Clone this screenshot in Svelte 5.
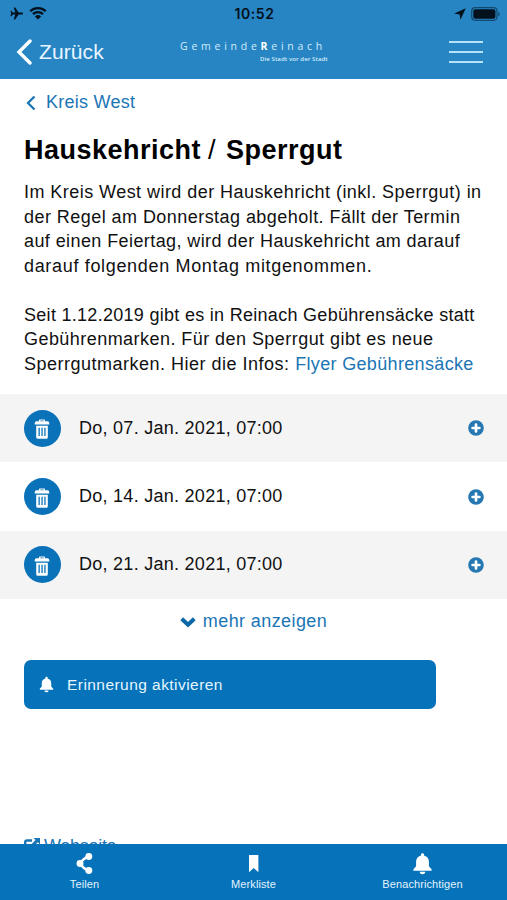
<script lang="ts">
  interface Pickup {
    date: string;
  }

  const pickups: Pickup[] = [
    { date: 'Do, 07. Jan. 2021, 07:00' },
    { date: 'Do, 14. Jan. 2021, 07:00' },
    { date: 'Do, 21. Jan. 2021, 07:00' }
  ];

  const bell =
    'M12 1.2c-1 0-1.6.7-1.6 1.6v.8C7 4.4 5.3 7 5.3 10.2v4.7L2.5 18v1.5h19V18l-2.8-3.1v-4.7c0-3.2-1.7-5.8-5.1-6.6v-.8c0-.9-.6-1.6-1.6-1.6zM9.1 20.5a2.9 2.6 0 0 0 5.8 0z';
</script>

<div class="screen">
  <header>
    <div class="status">
      <span class="status-side">
        <svg class="plane" viewBox="0 0 24 24" aria-hidden="true">
          <path d="M24 12c0-1.300-1-2-2.500-2H16L9.500 1H6.800l3 9H5L2.800 7H.8l1.400 5-1.400 5h2L5 14h4.800l-3 9h2.700l6.500-9h5.500c1.500 0 2.500-.7 2.500-2z" />
        </svg>
        <svg class="wifi" viewBox="0 0 18 14" aria-hidden="true">
          <path d="M1.200 5.200a11.200 11.200 0 0 1 15.600 0M4 8.200a7.200 7.200 0 0 1 10 0" />
          <path class="solid" d="M9 13.600 5.900 10.500a4.500 4.500 0 0 1 6.200 0z" />
        </svg>
      </span>
      <time>10:52</time>
      <span class="status-side end">
        <svg class="locate" viewBox="0 0 12 12" aria-hidden="true">
          <path d="M11.800.2.200 5.600l5.400.8.800 5.400z" />
        </svg>
        <svg class="battery" viewBox="0 0 30 14" aria-hidden="true">
          <rect class="shell" x=".7" y=".7" width="25.300" height="12.600" rx="3.500" />
          <rect x="2.300" y="2.300" width="22.100" height="9.400" rx="2" />
          <path class="cap" d="M27.300 4.700v4.600c1.800-.7 1.800-3.900 0-4.600z" />
        </svg>
      </span>
    </div>
    <nav class="topbar">
      <a class="back" href="#zurueck">
        <svg viewBox="0 0 16 26" aria-hidden="true"><path d="M14 2 3 13l11 11" /></svg>
        <span>Zurück</span>
      </a>
      <div class="brand">
        <span class="brand-name">Gemeinde<b>R</b>einach</span>
        <span class="brand-claim">Die Stadt vor der Stadt</span>
      </div>
      <button class="menu" aria-label="Menü"><i></i><i></i><i></i></button>
    </nav>
  </header>

  <main>
    <a class="crumb" href="#kreis-west">
      <svg viewBox="0 0 10 16" aria-hidden="true"><path d="M8.500 1.500 2 8l6.500 6.500" /></svg>
      <span>Kreis West</span>
    </a>
    <h1>Hauskehricht <span class="slash">/</span> Sperrgut</h1>
    <p>
      <span class="l1">Im Kreis West wird der Hauskehricht (inkl. Sperrgut) in</span><br />
      <span class="l2">der Regel am Donnerstag abgeholt. Fällt der Termin</span><br />
      <span class="l3">auf einen Feiertag, wird der Hauskehricht am darauf</span><br />
      <span class="l4">darauf folgenden Montag mitgenommen.</span>
    </p>
    <p>
      <span class="l5">Seit 1.12.2019 gibt es in Reinach Gebührensäcke statt</span><br />
      <span class="l6">Gebührenmarken. Für den Sperrgut gibt es neue</span><br />
      <span>Sperrgutmarken. Hier die Infos: <a class="flyer" href="#flyer">Flyer Gebührensäcke</a></span>
    </p>

    <ul>
      {#each pickups as pickup}
        <li>
          <span class="badge">
            <svg viewBox="0 0 16 20" aria-hidden="true">
              <path d="M5 2.300V1.200Q5 .5 5.700.5h4.600q.7 0 .7.700v1.100h2.500q1.800 0 1.800 2.300v1H.7v-1q0-2.300 1.800-2.300zm1.300 0h3.400v-.7H6.300z" />
              <path fill-rule="evenodd" d="M2.200 6.800h11.600v11.400q0 1.500-1.500 1.500H3.700q-1.500 0-1.500-1.500zM4.500 8.700v8.300h1.300V8.700zm2.900 0v8.300h1.300V8.700zm2.900 0v8.300h1.300V8.700z" />
            </svg>
          </span>
          <span class="date">{pickup.date}</span>
          <button class="add" aria-label="Hinzufügen">
            <svg viewBox="0 0 16 16" aria-hidden="true">
              <circle cx="8" cy="8" r="7.800" />
              <path d="M8 4.600v6.800M4.600 8h6.800" />
            </svg>
          </button>
        </li>
      {/each}
    </ul>

    <button class="more">
      <svg viewBox="0 0 16 12" aria-hidden="true"><path d="m1.700 2.800 6.300 6 6.300-6" /></svg>
      <span>mehr anzeigen</span>
    </button>

    <button class="remind">
      <svg viewBox="0 0 24 24" aria-hidden="true"><path d={bell} /></svg>
      <span>Erinnerung aktivieren</span>
    </button>

    <a class="website" href="#webseite">
      <svg viewBox="0 0 16 16" aria-hidden="true">
        <path class="box" d="M8 2.500H3q-1.800 0-1.800 1.800v8.500q0 1.700 1.800 1.700h8.500q1.700 0 1.700-1.700V10" />
        <path d="M9.500 0H16v6.500l-2.200-2.200-6 6-2.200-2.200 6-6z" />
      </svg>
      <span>Webseite</span>
    </a>
  </main>

  <footer>
    <a href="#teilen">
      <svg viewBox="0 0 24 24" aria-hidden="true">
        <path class="link" d="M16.500 4.700Q11 6.200 7.500 12q3.500 5.800 9 7.300" />
        <circle cx="16.500" cy="4.700" r="3.600" />
        <circle cx="7.300" cy="12" r="3.600" />
        <circle cx="16.500" cy="19.300" r="3.600" />
      </svg>
      <span>Teilen</span>
    </a>
    <a href="#merkliste">
      <svg viewBox="0 0 24 24" aria-hidden="true"><path d="M7.300 3h9.800v18L12.200 16.800 7.300 21z" /></svg>
      <span>Merkliste</span>
    </a>
    <a href="#benachrichtigen">
      <svg viewBox="0 0 24 24" aria-hidden="true"><path d={bell} /></svg>
      <span>Benachrichtigen</span>
    </a>
  </footer>
</div>

<style>
  :global(body) {
    background: #fff;
  }
  .screen {
    display: flex;
    flex-direction: column;
    height: 900px;
    overflow: hidden;
    font-family: 'Liberation Sans', Arial, sans-serif;
    color: #111;
  }
  a {
    color: #1b75b5;
    text-decoration: none;
  }
  button {
    border: 0;
    padding: 0;
    background: none;
    font: inherit;
    color: inherit;
  }
  svg {
    display: block;
    flex: none;
    fill: currentColor;
  }
  span {
    white-space: nowrap;
  }

  header {
    flex: none;
    height: 79px;
    background: #2785c3;
  }
  .status {
    display: grid;
    grid-template-columns: 1fr auto 1fr;
    align-items: center;
    height: 26px;
    padding: 0 6px 0 8px;
    color: #03111d;
  }
  time {
    font: 600 14px/26px Inter, sans-serif;
    letter-spacing: 0.6px;
    padding-top: 1px;
  }
  .status-side {
    display: flex;
    align-items: center;
    gap: 5px;
  }
  .end {
    justify-content: flex-end;
    gap: 5px;
  }
  .plane {
    width: 15px;
    height: 13px;
    margin-left: 1px;
  }
  .wifi {
    width: 18px;
    height: 14px;
    margin-top: -2px;
  }
  .wifi path {
    fill: none;
    stroke: currentColor;
    stroke-width: 2.3;
  }
  .wifi .solid {
    fill: currentColor;
    stroke: none;
  }
  .locate {
    width: 12px;
    height: 12px;
  }
  .battery {
    width: 30px;
    height: 14px;
  }
  .shell {
    fill: none;
    stroke: #11486f;
    stroke-width: 1.2;
  }
  .cap {
    fill: #11486f;
  }

  .topbar {
    display: grid;
    grid-template-columns: 180px 1fr 58px;
    height: 53px;
    color: #e9f6ff;
  }
  .back {
    display: flex;
    align-items: center;
    gap: 7px;
    padding: 0 0 1px 16px;
    color: inherit;
    font-size: 21px;
    letter-spacing: 0.1px;
  }
  .back svg {
    width: 16px;
    height: 26px;
    fill: none;
    stroke: #fff;
    stroke-width: 3.4;
    stroke-linecap: round;
  }
  .brand {
    display: flex;
    flex-direction: column;
    padding-top: 14px;
    font-family: 'Open Sans', sans-serif;
    color: #d3ecfb;
  }
  .brand-name {
    font-size: 10.5px;
    line-height: 13px;
    letter-spacing: 3.75px;
  }
  .brand-name b {
    color: #fff;
  }
  .brand-claim {
    margin-left: 80px;
    font-size: 6px;
    font-weight: 600;
    line-height: 12px;
    letter-spacing: 0.1px;
  }
  .menu {
    display: flex;
    flex-direction: column;
    gap: 8px;
    width: 34px;
    padding-top: 15px;
  }
  .menu i {
    height: 2px;
    background: #b4e2f8;
  }

  main {
    flex: 1;
    min-height: 0;
    overflow: hidden;
    display: flex;
    flex-direction: column;
  }
  .crumb {
    display: flex;
    align-items: center;
    gap: 10px;
    margin: 13px 0 0 26px;
    height: 23px;
    font-size: 18px;
    letter-spacing: 0.25px;
  }
  .crumb svg {
    width: 10px;
    height: 16px;
    fill: none;
    stroke: currentColor;
    stroke-width: 2.3;
  }
  h1 {
    margin: 18px 24px 0;
    height: 36px;
    font-size: 27px;
    line-height: 38px;
    letter-spacing: 0.5px;
    color: #000;
  }
  .slash {
    font-weight: 400;
    margin: 0 2px 0 -1px;
  }
  p {
    margin: 13px 0 0 24px;
    font-size: 18px;
    line-height: 24.5px;
    letter-spacing: 0.5px;
  }
  p + p {
    margin-top: 24.5px;
  }
  .l1,
  .l2,
  .l6 {
    letter-spacing: 0.45px;
  }
  .l3 {
    letter-spacing: 0.41px;
  }
  .l4 {
    letter-spacing: 0.67px;
  }
  .l5 {
    letter-spacing: 0.29px;
  }
  .flyer {
    letter-spacing: 0.34px;
  }

  ul {
    margin: 18px 0 0;
    padding: 0;
    list-style: none;
  }
  li {
    display: flex;
    align-items: center;
    height: 68.4px;
    padding: 0 23px 0 24px;
  }
  li:nth-child(odd) {
    background: #f4f4f4;
  }
  .badge {
    display: grid;
    place-items: center;
    width: 37px;
    height: 37px;
    border-radius: 50%;
    background: #0972b9;
    color: #fff;
  }
  .badge svg {
    width: 16px;
    height: 20px;
    margin: 2px 1px 0 0;
  }
  .date {
    flex: 1;
    margin-left: 18px;
    font-size: 18px;
    letter-spacing: 0.27px;
  }
  .add svg {
    width: 16px;
    height: 16px;
    color: #2678b2;
  }
  .add path {
    stroke: #fff;
    stroke-width: 2.7;
    stroke-linecap: round;
  }

  .more {
    display: flex;
    align-items: center;
    align-self: center;
    flex: none;
    gap: 7px;
    height: 24px;
    margin-top: 10px;
    font-size: 18px;
    letter-spacing: 0.4px;
    color: #1b75b5;
  }
  .more svg {
    width: 16px;
    height: 12px;
    margin-top: 2px;
    fill: none;
    stroke: #0d68a8;
    stroke-width: 4;
  }
  .remind {
    display: flex;
    align-items: center;
    flex: none;
    gap: 12px;
    width: 412px;
    height: 49px;
    margin: 27px 0 0 24px;
    padding-left: 14px;
    border-radius: 7px;
    background: #0572b9;
    color: #e6f6ff;
    font-size: 15.5px;
    letter-spacing: 0.45px;
  }
  .remind svg {
    width: 17px;
    height: 17px;
    color: #fff;
  }
  .website {
    display: flex;
    align-items: center;
    gap: 4px;
    flex: none;
    height: 24px;
    margin: 125px 0 0 24px;
    font-size: 18px;
    letter-spacing: -0.3px;
  }
  .website svg {
    width: 16px;
    height: 16px;
  }
  .box {
    fill: none;
    stroke: currentColor;
    stroke-width: 2.4;
  }

  footer {
    display: grid;
    grid-template-columns: repeat(3, 1fr);
    flex: none;
    height: 56px;
    background: #0572b9;
  }
  footer a {
    display: flex;
    flex-direction: column;
    align-items: center;
    padding-top: 8px;
    color: #fff;
    font-size: 11px;
    line-height: 14px;
  }
  footer svg {
    width: 23px;
    height: 23px;
  }
  footer span {
    margin-top: 2px;
    color: #e3f4ff;
    letter-spacing: 0.1px;
  }
  .link {
    fill: none;
    stroke: currentColor;
    stroke-width: 2.6;
  }
</style>
